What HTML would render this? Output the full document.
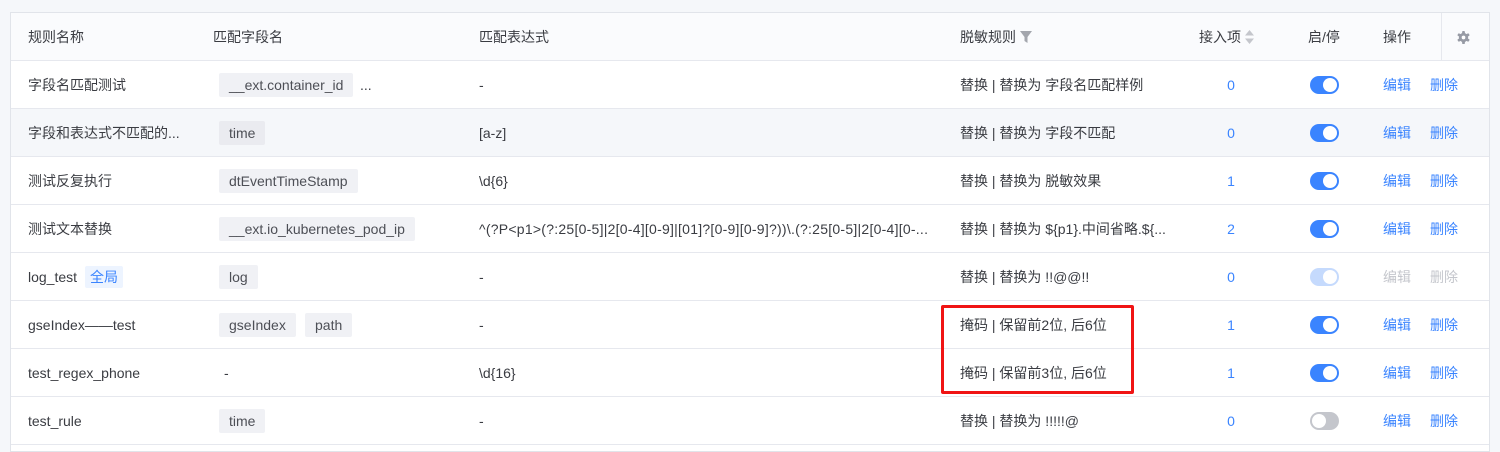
<!DOCTYPE html><html><head><meta charset="utf-8"><style>
*{margin:0;padding:0;box-sizing:border-box}
body{width:1500px;height:444px;background:#f5f7fa;font-family:"Liberation Sans","Noto Sans CJK SC",sans-serif;font-size:14px;color:#3a3c42;position:relative;overflow:hidden}
.tbl{position:absolute;left:10px;top:12px;width:1480px;height:440px;background:#fff;border:1px solid #e1e4ea}
.row{position:absolute;left:0;width:1478px;height:48px;border-bottom:1px solid #e6e8ee}
.row span,.row div{position:absolute}
.c{top:1px;line-height:47px;white-space:nowrap}
.tag{top:12px;height:24px;line-height:24px;background:#f0f1f5;padding:0 10px;border-radius:2px;color:#4d4f56}
.num{color:#3a84ff;width:40px;text-align:center;left:1200px}
.sw{top:15px;left:1299px;width:29px;height:18px;border-radius:9px;background:#3a84ff}
.sw::after{content:"";position:absolute;right:2px;top:2px;width:14px;height:14px;border-radius:50%;background:#fff}
.sw.off{background:#c4c6cc}.sw.off::after{right:auto;left:2px}
.sw.dis{background:#c5dafd}
.lk{color:#3a84ff}
.dl{color:#c4c6cc}
</style></head><body>
<div class="tbl">
<div class="row" style="top:0;background:#fafbfd">
<span class="c" style="left:17px">规则名称</span>
<span class="c" style="left:202px">匹配字段名</span>
<span class="c" style="left:468px">匹配表达式</span>
<span class="c" style="left:949px">脱敏规则 <svg width="12" height="12" viewBox="0 0 12 12" style="vertical-align:-1px"><path d="M0 0H12L7.5 6V12L4.5 10V6Z" fill="#a3a6ad"/></svg></span>
<span class="c" style="left:1188px">接入项 <svg width="9" height="14" viewBox="0 0 9 14" style="vertical-align:-2px"><path d="M4.5 0L9 5.5H0Z M4.5 14L0 8.5H9Z" fill="#c4c6cc"/></svg></span>
<span class="c" style="left:1297px">启/停</span>
<span class="c" style="left:1372px">操作</span>
<div style="left:1430px;top:0;width:1px;height:47px;background:#e6e8ee"></div>
<svg style="position:absolute;left:1446px;top:18px" width="13" height="13" viewBox="0 0 14 14"><g fill="#979ba5"><rect x="5.5" y="0" width="3" height="14" rx="1"/><rect x="5.5" y="0" width="3" height="14" rx="1" transform="rotate(60 7 7)"/><rect x="5.5" y="0" width="3" height="14" rx="1" transform="rotate(120 7 7)"/><circle cx="7" cy="7" r="5"/></g><circle cx="7" cy="7" r="2" fill="#fff"/></svg>
</div>

<div class="row" style="top:48px">
<span class="c" style="left:17px">字段名匹配测试</span>
<span class="tag" style="left:208px">__ext.container_id</span><span class="c" style="left:349px">...</span>
<span class="c" style="left:468px">-</span>
<span class="c" style="left:949px">替换 | 替换为 字段名匹配样例</span>
<span class="c num">0</span><div class="sw"></div>
<span class="c lk" style="left:1372px">编辑</span><span class="c lk" style="left:1419px">删除</span>
</div>

<div class="row" style="top:96px;background:#f5f7fa">
<span class="c" style="left:17px">字段和表达式不匹配的...</span>
<span class="tag" style="left:208px;background:#eaebf0">time</span>
<span class="c" style="left:468px">[a-z]</span>
<span class="c" style="left:949px">替换 | 替换为 字段不匹配</span>
<span class="c num">0</span><div class="sw"></div>
<span class="c lk" style="left:1372px">编辑</span><span class="c lk" style="left:1419px">删除</span>
</div>

<div class="row" style="top:144px">
<span class="c" style="left:17px">测试反复执行</span>
<span class="tag" style="left:208px">dtEventTimeStamp</span>
<span class="c" style="left:468px">\d{6}</span>
<span class="c" style="left:949px">替换 | 替换为 脱敏效果</span>
<span class="c num">1</span><div class="sw"></div>
<span class="c lk" style="left:1372px">编辑</span><span class="c lk" style="left:1419px">删除</span>
</div>

<div class="row" style="top:192px">
<span class="c" style="left:17px">测试文本替换</span>
<span class="tag" style="left:208px">__ext.io_kubernetes_pod_ip</span>
<span class="c" style="left:468px;font-size:14px;letter-spacing:0.25px">^(?P&lt;p1&gt;(?:25[0-5]|2[0-4][0-9]|[01]?[0-9][0-9]?))\.(?:25[0-5]|2[0-4][0-...</span>
<span class="c" style="left:949px">替换 | 替换为 ${p1}.中间省略.${...</span>
<span class="c num">2</span><div class="sw"></div>
<span class="c lk" style="left:1372px">编辑</span><span class="c lk" style="left:1419px">删除</span>
</div>

<div class="row" style="top:240px">
<span class="c" style="left:17px">log_test</span>
<span style="left:74px;top:13px;height:22px;line-height:22px;padding:0 5px;background:#edf4ff;color:#3a84ff;border-radius:2px">全局</span>
<span class="tag" style="left:208px">log</span>
<span class="c" style="left:468px">-</span>
<span class="c" style="left:949px">替换 | 替换为 !!@@!!</span>
<span class="c num">0</span><div class="sw dis"></div>
<span class="c dl" style="left:1372px">编辑</span><span class="c dl" style="left:1419px">删除</span>
</div>

<div class="row" style="top:288px">
<span class="c" style="left:17px">gseIndex——test</span>
<span class="tag" style="left:208px">gseIndex</span><span class="tag" style="left:294px">path</span>
<span class="c" style="left:468px">-</span>
<span class="c" style="left:949px">掩码 | 保留前2位, 后6位</span>
<span class="c num">1</span><div class="sw"></div>
<span class="c lk" style="left:1372px">编辑</span><span class="c lk" style="left:1419px">删除</span>
</div>

<div class="row" style="top:336px">
<span class="c" style="left:17px">test_regex_phone</span>
<span class="c" style="left:213px">-</span>
<span class="c" style="left:468px">\d{16}</span>
<span class="c" style="left:949px">掩码 | 保留前3位, 后6位</span>
<span class="c num">1</span><div class="sw"></div>
<span class="c lk" style="left:1372px">编辑</span><span class="c lk" style="left:1419px">删除</span>
</div>

<div class="row" style="top:384px">
<span class="c" style="left:17px">test_rule</span>
<span class="tag" style="left:208px">time</span>
<span class="c" style="left:468px">-</span>
<span class="c" style="left:949px">替换 | 替换为 !!!!!@</span>
<span class="c num">0</span><div class="sw off"></div>
<span class="c lk" style="left:1372px">编辑</span><span class="c lk" style="left:1419px">删除</span>
</div>
</div>
<div style="position:absolute;left:941px;top:305px;width:193px;height:89px;border:3px solid #f01414;border-radius:2px"></div>
</body></html>
